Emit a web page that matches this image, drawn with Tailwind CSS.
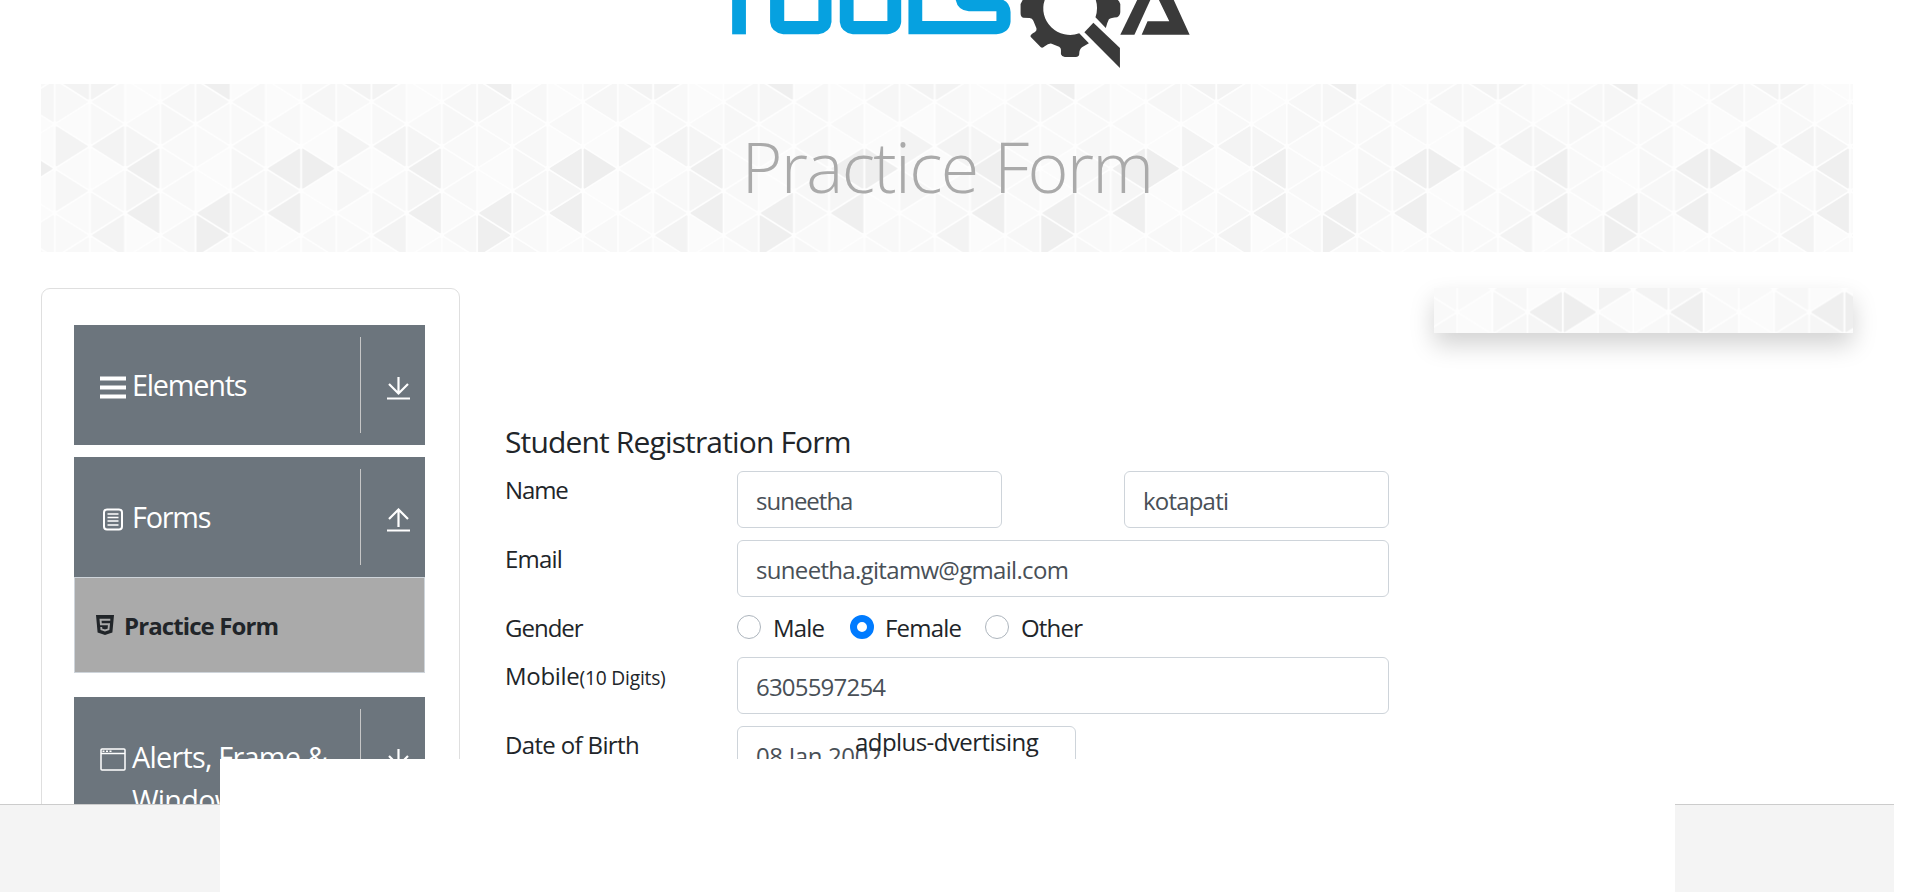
<!DOCTYPE html>
<html lang="en">
<head>
<meta charset="utf-8">
<title>Practice Form</title>
<script src="https://cdn.jsdelivr.net/npm/@tailwindcss/browser@4"></script>
</head>
<body class="bg-white">
<div class="relative h-[892px] w-[1920px] overflow-hidden bg-white font-['Open_Sans','Noto_Sans',sans-serif] text-2xl leading-9 tracking-[-0.8px] text-[#212529]">
  <div class="w-[1894px]">
    <header class="flex h-[84px] justify-center pl-[5px]">
      <svg class="h-[84px] w-[541px]" viewBox="0 0 1568 252" preserveAspectRatio="none">
        <g fill="#06a1e0">
          <path d="M154 0H194V103H154Z"/>
          <path d="M264 0V66Q267 97 302 103H404Q439 97 442 66V0H404V63H305V0Z"/>
          <path d="M466 0V66Q469 97 504 103H604Q641 97 644 66V0H604V63H506V0Z"/>
          <path d="M665 0V103H920Q958 98 961 65V36Q959 8 940 0H802Q808 31 840 34H920V63H705V0Z"/>
        </g>
        <g fill="#3a3a3a">
          <path d="M996 0L990 12V40Q990 52 998 53L1016 54Q1024 55 1027 62L1036 85Q1038 91 1032 96Q1017 104 1019 110L1048 141Q1053 146 1060 139Q1072 129 1080 131L1098 139Q1107 142 1107 150V163Q1110 171 1118 171H1150Q1160 170 1160 162Q1160 148 1168 142L1188 130L1160 100A78 79 0 0 1 1060 0Z"/>
          <path d="M1208 0Q1216 25 1207 52L1237 84Q1241 68 1246 58Q1252 53 1270 52Q1279 46 1279 36V12Q1276 3 1272 0Z"/>
          <path d="M1201 68L1278 144V204L1175 97Z"/>
          <path d="M1279 104L1328 0H1366L1320 104Z"/>
          <path d="M1391 0H1434L1480 104H1341L1358 64H1421Z"/>
        </g>
      </svg>
    </header>

    <div class="relative mx-[41px] h-[168px]">
      <svg class="absolute inset-0 h-full w-full">
        <defs><pattern id="tri" width="281.6" height="168" patternUnits="userSpaceOnUse" patternTransform="translate(13.7 0)"></pattern>
        <pattern id="tri2" href="#tri" patternTransform="translate(-117.6 -60.500)"></pattern></defs>
        <rect width="100%" height="100%" fill="url(#tri)"/>
      </svg>
      <h1 class="relative pt-[30px] text-center text-[70px] font-light leading-[105px] tracking-[-1.7px] text-[#aaaaaa]">Practice Form</h1>
    </div>

    <div class="flex items-start pl-[41px] pt-9">
      <aside class="h-[700px] w-[419px] rounded-[9px] border border-[#dfdfdf] px-8 pt-9 text-[28.8px] leading-[43px] tracking-[-1.2px] text-white">
        <div class="flex h-[120px] w-[351px] bg-[#6c757d] pl-[25.500px]">
          <svg class="mt-[51px] h-[24px] w-[26px] shrink-0" viewBox="0 0 26 24" fill="#fff"><path d="M0 .5H26V4.500H0ZM0 9.500H26V13.500H0ZM0 18.500H26V22.500H0Z"/></svg>
          <div class="ml-[6.500px] w-[228px] whitespace-nowrap pt-[38px]">Elements</div>
          <div class="my-3 border-l border-[#c6c6c6]"></div>
          <svg class="ml-[26px] mt-[51px] h-[26px] w-[23px] shrink-0" viewBox="0 0 23 26" fill="none" stroke="#fff" stroke-width="2.200"><path d="M11.500 1V17M2 8L11.500 17.500L21 8M0 22.500H23"/></svg>
        </div>
        <div class="mt-3 flex h-[120px] w-[351px] bg-[#6c757d] pl-[25.500px]">
          <svg class="mt-[51px] h-[24px] w-[26px] shrink-0" viewBox="0 0 26 24" fill="none" stroke="#fff"><rect x="4" y="1.500" width="18" height="20" rx="3" stroke-width="2"/><path stroke-width="1.300" d="M7.500 6H18.500M7.500 9.500H18.500M7.500 13H18.500M7.500 17H18.500"/></svg>
          <div class="ml-[6.500px] w-[228px] whitespace-nowrap pt-[38px]">Forms</div>
          <div class="my-3 border-l border-[#c6c6c6]"></div>
          <svg class="ml-[26px] mt-[51px] h-[26px] w-[23px] shrink-0" viewBox="0 0 23 26" fill="none" stroke="#fff" stroke-width="2.200"><path d="M11.500 19V2M2 11L11.500 1.500L21 11M0 22.500H23"/></svg>
        </div>
        <div class="flex h-24 w-[351px] border border-[#ced4da] bg-[#aaaaaa] pl-[21px] text-2xl font-bold leading-9 tracking-[-0.9px] text-[#212529]">
          <svg class="mt-[37px] h-5 w-[18px] shrink-0" viewBox="0 0 18 20"><path fill="#212529" d="M0 0H18L16.400 17.500L9 20L1.600 17.500Z"/><path fill="none" stroke="#aaa" stroke-width="1.900" d="M14.300 4.700H4.500L4.900 9.200H13L12.500 14.300L9 15.400L5.400 14.300L5.200 12"/></svg>
          <div class="ml-[10px] whitespace-nowrap pt-[30px]">Practice Form</div>
        </div>
        <div class="mt-6 flex h-[163px] w-[351px] bg-[#6c757d] pl-[25.500px]">
          <svg class="mt-[51px] h-[24px] w-[26px] shrink-0" viewBox="0 0 26 24" fill="none" stroke="#fff" stroke-width="1.500"><rect x="1" y="1" width="24" height="21" rx="1"/><path d="M1 5.500H25"/><path d="M2.500 3.300H13" stroke-dasharray="2 1.500"/></svg>
          <div class="ml-[6.500px] w-[228px] whitespace-nowrap pt-[38px] tracking-[-0.75px]">Alerts, Frame &amp;<br>Windows</div>
          <div class="my-3 border-l border-[#c6c6c6]"></div>
          <svg class="ml-[26px] mt-[51px] h-[26px] w-[23px] shrink-0" viewBox="0 0 23 26" fill="none" stroke="#fff" stroke-width="2.200"><path d="M11.500 1V17M2 8L11.500 17.500L21 8M0 22.500H23"/></svg>
        </div>
      </aside>

      <main class="ml-[45px] w-[884px] whitespace-nowrap pt-[136px]">
        <h5 class="h-[47px] text-[30px] leading-9 tracking-[-0.85px]">Student Registration Form</h5>
        <div class="flex h-[69px]">
          <label class="w-[232px] pt-px tracking-[-1.1px]">Name</label>
          <div class="h-[57px] w-[265px] rounded-md border border-[#ced4da] pl-[18px] pt-[11px] tracking-[-1px] text-[#495057]">suneetha</div>
          <div class="ml-[122px] h-[57px] w-[265px] rounded-md border border-[#ced4da] pl-[18px] pt-[11px] text-[#495057]">kotapati</div>
        </div>
        <div class="flex h-[69px]">
          <label class="w-[232px] pt-px">Email</label>
          <div class="h-[57px] w-[652px] rounded-md border border-[#ced4da] pl-[18px] pt-[11px] tracking-[-0.68px] text-[#495057]">suneetha.gitamw@gmail.com</div>
        </div>
        <div class="flex h-12">
          <label class="w-[232px] pt-px tracking-[-1px]">Gender</label>
          <div class="mt-[6px] size-6 rounded-full border border-[#adb5bd]"></div>
          <span class="ml-[12px] w-[77px] pt-px">Male</span>
          <div class="mt-[6px] size-6 rounded-full border-[7.500px] border-[#007bff]"></div>
          <span class="ml-[11px] w-[100px] pt-px">Female</span>
          <div class="mt-[6px] size-6 rounded-full border border-[#adb5bd]"></div>
          <span class="ml-[12px] pt-px">Other</span>
        </div>
        <div class="flex h-[69px]">
          <label class="w-[232px] pt-px tracking-[-0.3px]">Mobile<span class="text-[19.2px] tracking-[-0.2px]">(10 Digits)</span></label>
          <div class="h-[57px] w-[652px] rounded-md border border-[#ced4da] pl-[18px] pt-[11px] text-[#495057]">6305597254</div>
        </div>
        <div class="flex h-[69px]">
          <label class="w-[232px] pt-px tracking-[-0.65px]">Date of Birth</label>
          <div class="h-[57px] w-[339px] rounded-md border border-[#ced4da] pl-[18px] pt-[11px] tracking-[-0.35px] text-[#495057]">08 Jan 2002</div>
        </div>
      </main>

      <div class="ml-[45px] h-[45px] w-[419px] shadow-[0_12px_24px_rgba(0,0,0,0.175)]">
        <svg class="block h-full w-full"><rect width="100%" height="100%" fill="url(#tri2)"/></svg>
      </div>
    </div>
  </div>

  <footer class="absolute left-0 top-[804px] h-[88px] w-[1894px] border-t border-[#cccccc] bg-[#f4f4f4]"></footer>
  <div class="absolute left-[220px] top-[759px] h-[133px] w-[1455px] bg-white"></div>
  <div class="absolute left-[855px] top-[724px] whitespace-nowrap tracking-[-0.55px]">adplus-dvertising</div>
</div>
<script>
// Shades per column, top to bottom, of the triangle wallpaper
const cols = [
  ['f3','f8','fb','f3','fa','f6','fa','f9','f8'],
  ['f3','f8','f8','f3','fb','f8','f7','f3','fa'],
  ['fb','fb','f9','f5','ef','f5','ef','fb','fa'],
  ['fa','f7','f7','f9','f9','f8','fa','f7','fa'],
  ['ef','f6','f9','f9','fb','fb','ef','ef','f9'],
  ['fb','f7','f9','f7','f7','f7','f7','f9','f7'],
  ['fa','fb','f8','fb','ef','f6','ef','fb','fa'],
  ['f8','f6','fb','fb','ee','fb','fb','f8','f9']];
const W = 35.2, H = 22.27;
let s = '<rect width="282" height="168" fill="#fefefe"/>';
cols.forEach((c, i) => c.forEach((v, k) => {
  const y = -4.500 + H * k, r = (i + k) % 2 === 1, a = i * W, b = a + W;
  const base = r ? a + 1.700 : b - 1.700, tip = r ? b - 3 : a + 3;
  s += `<polygon points="${base},${y - H + 3} ${base},${y + H - 3} ${tip},${y}" fill="#${v + v + v}" stroke="#${v + v + v}" stroke-width="1.500" stroke-linejoin="round"/>`;
}));
document.getElementById('tri').innerHTML = s;
</script>
</body>
</html>
